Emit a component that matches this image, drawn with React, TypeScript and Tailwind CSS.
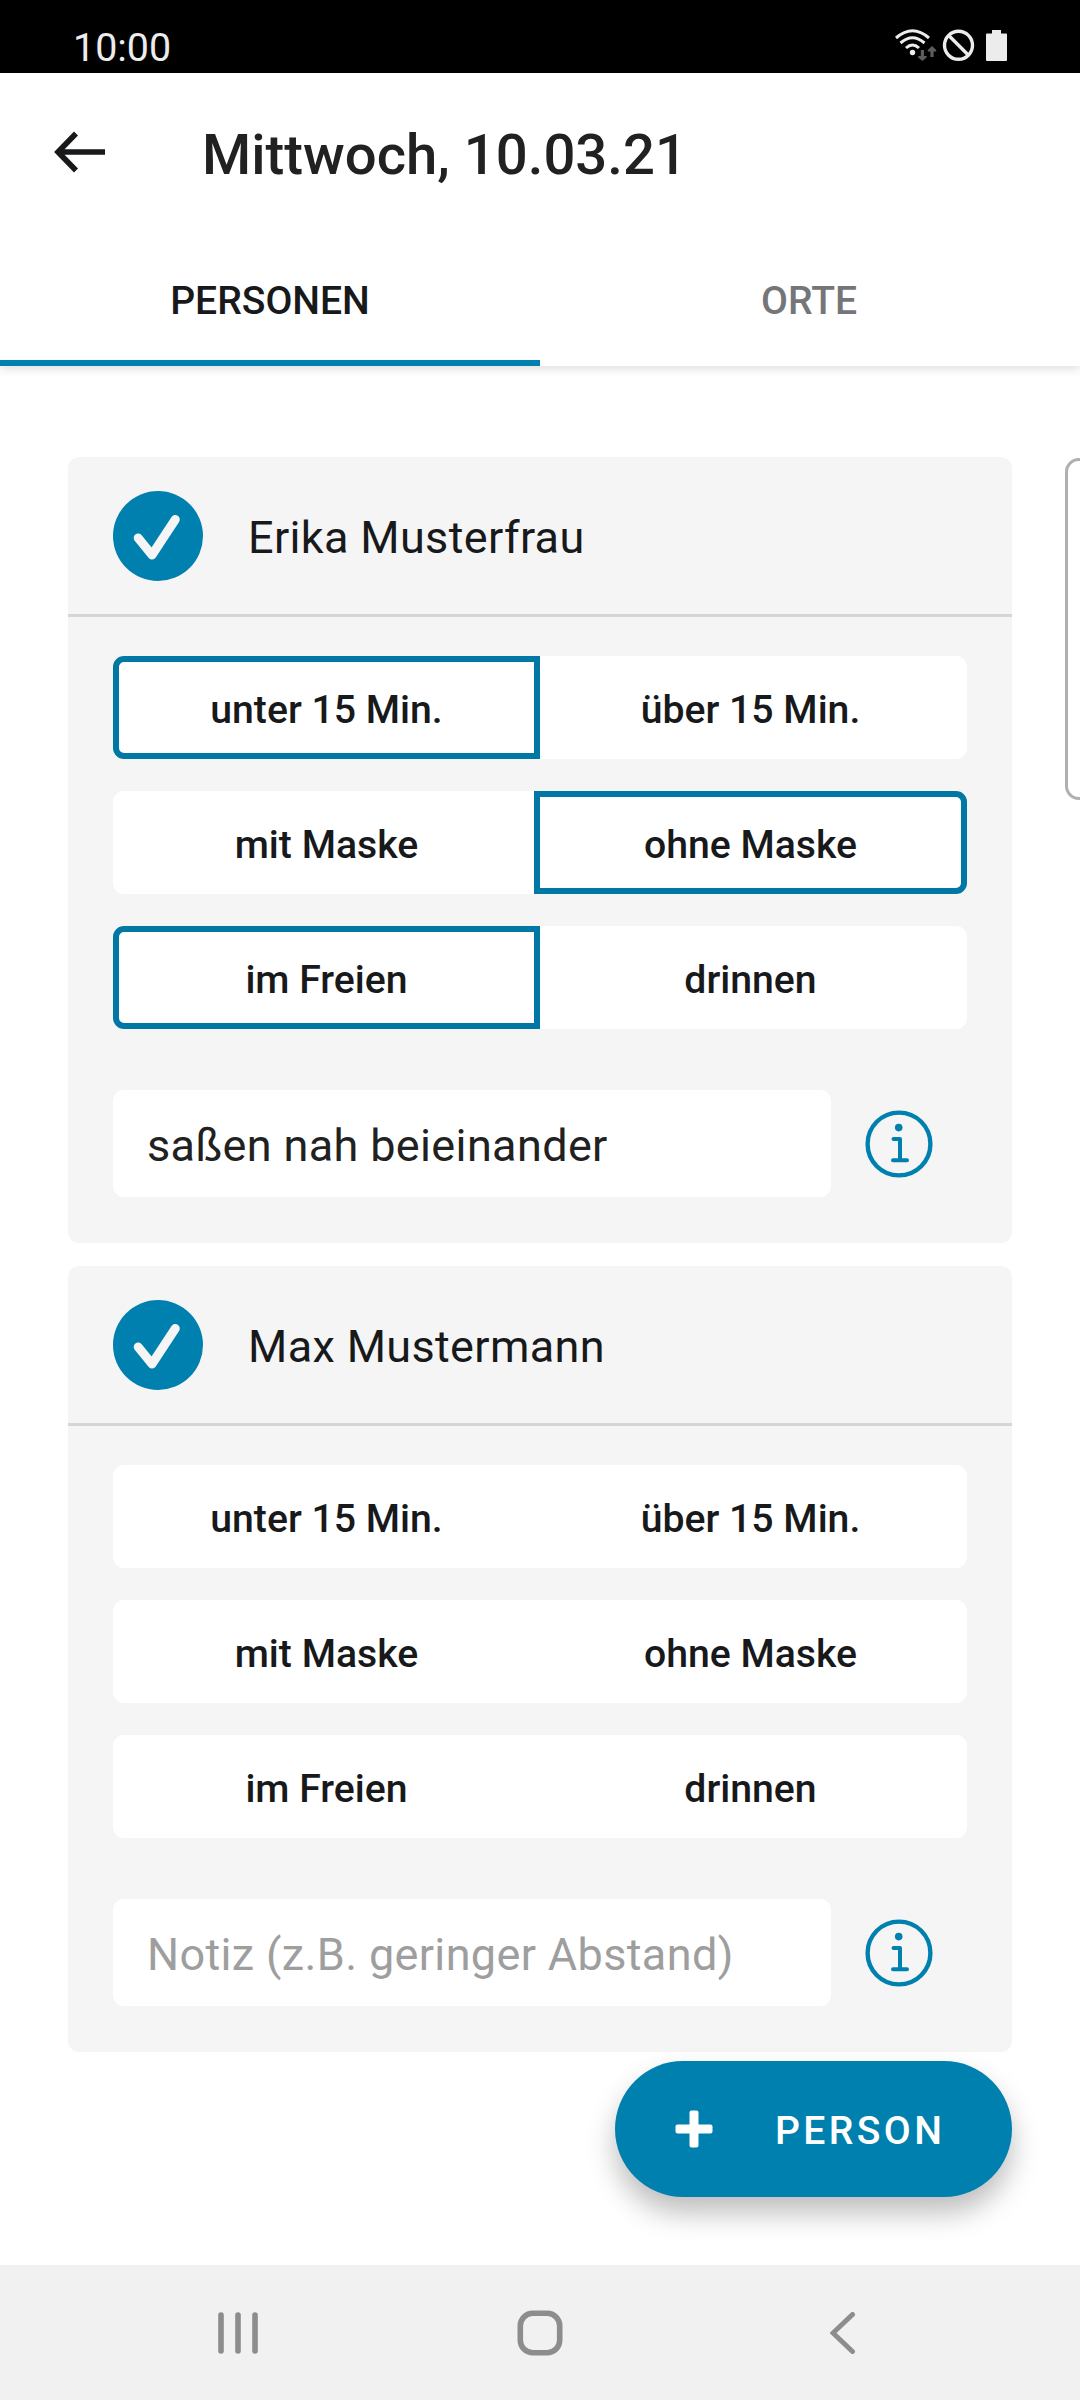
import React from "react";

type Pair = { left: string; right: string };
type Choice = "left" | "right" | null;

const rows: Pair[] = [
  { left: "unter 15 Min.", right: "über 15 Min." },
  { left: "mit Maske", right: "ohne Maske" },
  { left: "im Freien", right: "drinnen" },
];

function StatusBar() {
  return (
    <div className="flex h-[73px] items-start justify-between bg-black pl-[73px] pr-[73px] text-[#ececec]">
      <span className="pt-[24px] text-[39.400px] leading-[47px]">10:00</span>
      <div className="flex pt-[28px]">
        <svg width="112" height="36" viewBox="0 0 112 36" fill="none" stroke="#ececec" strokeWidth="3">
          <path d="M1 10Q17.500 -4.500 34 10" />
          <path d="M5.500 15Q17.500 4.500 29.500 15" />
          <path d="M11 20Q17.500 14 24 20" />
          <circle cx="17.500" cy="24.500" r="2.700" fill="#ececec" stroke="none" />
          <g fill="#5c5c5c" stroke="none">
            <path d="M25.800 22h3.200v6h2.600v1.500l-4.200 3.500l-4.200-3.500v-1.500h2.600z" />
            <path d="M35.400 29h3.200v-5.500h2.600V22L37 18l-4.200 4v1.500h2.600z" />
          </g>
          <circle cx="63.500" cy="17.300" r="14" strokeWidth="3.400" />
          <path d="M53.500 7.300L73.500 27.300" strokeWidth="3.400" />
          <path d="M91 6.500a1 1 0 0 1 1-1h5V2h9v3.500h5a1 1 0 0 1 1 1V32a1 1 0 0 1-1 1H92a1 1 0 0 1-1-1z" fill="#ececec" stroke="none" />
        </svg>
      </div>
    </div>
  );
}

function Header() {
  return (
    <header className="h-[293px] bg-white shadow-[0_3px_9px_rgba(0,0,0,0.13)]">
      <div className="flex h-[158px] items-center">
        <svg className="ml-[54px] w-[52px]" height="42" viewBox="0 0 52 42" fill="none" stroke="#17191b" strokeWidth="5.600">
          <path d="M51 21H5M22 2.500L4 21L22 39.500" />
        </svg>
        <h1 className="ml-[96px] pt-[5px] text-[56.250px] leading-[66px] font-medium text-[#212121]">Mittwoch, 10.03.21</h1>
      </div>
      <div className="grid h-[135px] grid-cols-2 text-[39.100px] font-medium">
        <div className="flex items-center justify-center border-b-[6px] border-[#0080ae] pt-[11px] text-[#17191b]">PERSONEN</div>
        <div className="flex items-center justify-center border-b-[6px] border-transparent pt-[11px] pr-[2px] text-[#757678]">ORTE</div>
      </div>
    </header>
  );
}

function Toggle({ pair, choice }: { pair: Pair; choice: Choice }) {
  return (
    <div className="grid h-[103px] grid-cols-[427px_427px] text-[39.200px] font-medium text-[#17191b]">
      <button
        className={
          choice === "left"
            ? "rounded-l-[11px] border-[6px] border-[#0078a3] bg-white pt-[5px]"
            : "rounded-l-[11px] border-[6px] border-white bg-white pt-[5px]"
        }
      >
        {pair.left}
      </button>
      <button
        className={
          choice === "right"
            ? "z-10 -ml-[6px] rounded-r-[11px] border-[6px] border-[#0078a3] bg-white pt-[5px]"
            : "rounded-r-[11px] bg-white pt-[5px] pr-[6px]"
        }
      >
        {pair.right}
      </button>
    </div>
  );
}

function InfoIcon() {
  return (
    <svg width="68" height="68" viewBox="0 0 68 68" fill="none" stroke="#0080ae" strokeWidth="4" strokeLinecap="round" strokeLinejoin="round">
      <circle cx="34" cy="34" r="31.400" strokeWidth="4.400" />
      <circle cx="33.700" cy="17.600" r="3.800" fill="#0080ae" stroke="none" />
      <path d="M28.500 29H35V50M28 50.200H42" />
    </svg>
  );
}

function PersonCard({ name, choices, note }: { name: string; choices: Choice[]; note?: string }) {
  return (
    <section className="h-[786px] rounded-[11px] bg-[#f5f5f5]">
      <div className="flex h-[160px] items-center border-b-[3px] border-[#d5d5d5] pl-[45px]">
        <svg width="90" height="90" viewBox="0 0 90 90" fill="none">
          <circle cx="45" cy="45" r="45" fill="#0080ae" />
          <path d="M25.200 47L39 64L62.300 28.500" stroke="#f5f5f5" strokeWidth="9" strokeLinecap="round" strokeLinejoin="round" />
        </svg>
        <span className="ml-[45px] pt-[3px] text-[45px] leading-[53px] tracking-[0.350px] text-[#17191b]">{name}</span>
      </div>
      <div className="flex flex-col gap-[32px] px-[45px] pt-[39px]">
        {rows.map((pair, i) => (
          <Toggle key={pair.left} pair={pair} choice={choices[i]} />
        ))}
      </div>
      <div className="mt-[61px] flex items-center pl-[45px]">
        <div className="flex h-[107px] w-[718px] items-center rounded-[11px] bg-white pt-[5px] pl-[34px] text-[45px] tracking-[0.360px]">
          {note ? <span className="text-[#212121]">{note}</span> : <span className="text-[#9e9e9e]">Notiz (z.B. geringer Abstand)</span>}
        </div>
        <div className="ml-[34px]">
          <InfoIcon />
        </div>
      </div>
    </section>
  );
}

function NavBar() {
  return (
    <nav className="flex h-[135px] items-center bg-[#f1f1f1] pt-px">
      <svg className="ml-[218px]" width="40" height="42" viewBox="0 0 40 42" stroke="#8d8d8d" strokeWidth="5.600" strokeLinecap="round">
        <path d="M3 3V39M20 3V39M37 3V39" />
      </svg>
      <svg className="ml-[259px]" width="46" height="46" viewBox="0 0 46 46" fill="none" stroke="#8d8d8d" strokeWidth="5.600">
        <rect x="3.300" y="3.300" width="39.400" height="39.400" rx="12.500" />
      </svg>
      <svg className="ml-[267px]" width="26" height="42" viewBox="0 0 26 42" fill="none" stroke="#8d8d8d" strokeWidth="5" strokeLinecap="round">
        <path d="M22.500 2.500L3 21L22.500 39.500" />
      </svg>
    </nav>
  );
}

export default function App() {
  return (
    <div className="relative flex h-[2400px] w-[1080px] flex-col overflow-hidden bg-white font-['Roboto',sans-serif]">
      <StatusBar />
      <Header />
      <main className="flex flex-1 flex-col gap-[23px] px-[68px] pt-[91px]">
        <PersonCard name="Erika Musterfrau" choices={["left", "right", "left"]} note="saßen nah beieinander" />
        <PersonCard name="Max Mustermann" choices={[null, null, null]} />
      </main>
      <div className="absolute top-[458px] -right-[20px] h-[342px] w-[35px] rounded-[14px] border-[3px] border-[#b0b0b0] bg-white" />
      <button className="absolute top-[2061px] right-[68px] flex h-[136px] w-[397px] items-center rounded-full bg-[#0080ae] pl-[60px] text-[39.100px] font-medium tracking-[3.400px] text-white shadow-[0_16px_28px_rgba(0,0,0,0.26)]">
        <svg width="38" height="38" viewBox="0 0 38 38" fill="none">
          <rect x="14.500" y="0.500" width="9" height="37" rx="2" fill="white" />
          <rect x="0.500" y="14.500" width="37" height="9" rx="2" fill="white" />
        </svg>
        <span className="ml-[62px] pt-[5px]">PERSON</span>
      </button>
      <NavBar />
    </div>
  );
}
